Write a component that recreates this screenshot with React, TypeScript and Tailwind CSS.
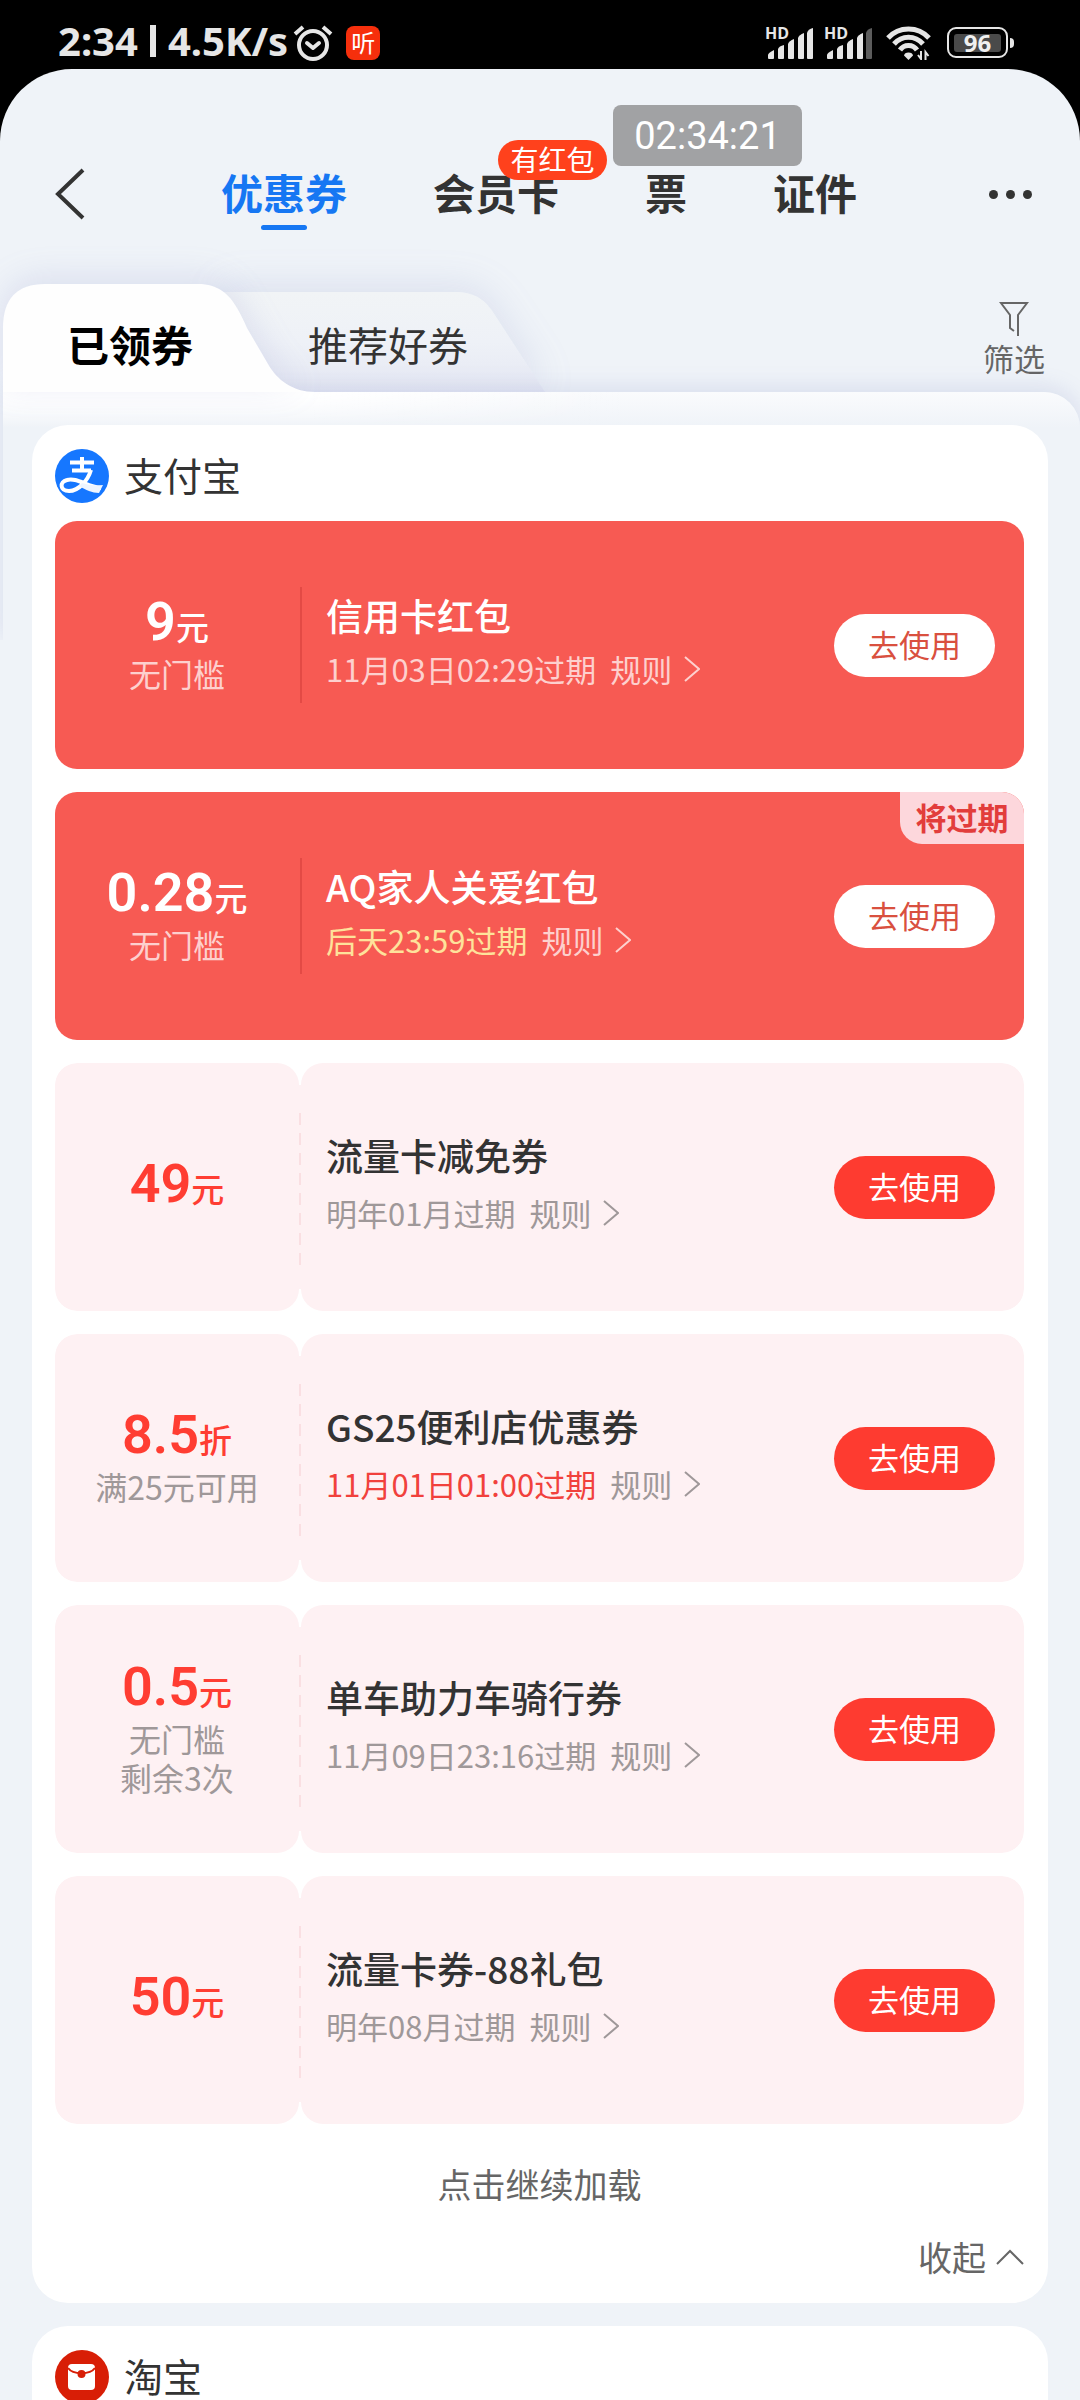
import React from "react";

type Coupon = {
  amount: string;
  unit: string;
  notes: string[];
  title: string;
  expiry: string;
  tone: "red" | "pale";
  urgent?: boolean;
  tag?: string;
};

const coupons: Coupon[] = [
  { amount: "9", unit: "元", notes: ["无门槛"], title: "信用卡红包", expiry: "11月03日02:29过期", tone: "red" },
  { amount: "0.28", unit: "元", notes: ["无门槛"], title: "AQ家人关爱红包", expiry: "后天23:59过期", tone: "red", urgent: true, tag: "将过期" },
  { amount: "49", unit: "元", notes: [], title: "流量卡减免券", expiry: "明年01月过期", tone: "pale" },
  { amount: "8.5", unit: "折", notes: ["满25元可用"], title: "GS25便利店优惠券", expiry: "11月01日01:00过期", tone: "pale", urgent: true },
  { amount: "0.5", unit: "元", notes: ["无门槛", "剩余3次"], title: "单车助力车骑行券", expiry: "11月09日23:16过期", tone: "pale" },
  { amount: "50", unit: "元", notes: [], title: "流量卡券-88礼包", expiry: "明年08月过期", tone: "pale" },
];

function SignalIcon({ weak }: { weak?: boolean }) {
  return (
    <span className="relative block h-8 w-12">
      <span className="absolute left-0 top-0 font-['Open_Sans',sans-serif] text-[16px] font-bold leading-[12px]">HD</span>
      <svg viewBox="0 0 48 32" className="h-8 w-12" fill="currentColor" aria-hidden="true">
        <path d="M3 31V28Q3 26 9 23V31Q9 32 8 32H4Q3 32 3 31Z" />
        <path d="M13 31V22Q14 19 19 18V31Q19 32 18 32H14Q13 32 13 31Z" />
        <path d="M23 31V17Q24 14 29 12V31Q29 32 28 32H24Q23 32 23 31Z" />
        <path d="M33 31V11Q34 8 39 6V31Q39 32 38 32H34Q33 32 33 31Z" />
        <path d="M42 31V6Q43 2 48 1V31Q48 32 47 32H43Q42 32 42 31Z" opacity={weak ? 0.4 : 1} />
      </svg>
    </span>
  );
}

function StatusBar() {
  return (
    <div className="flex h-[69px] items-center pl-[58px] pr-[66px] pt-4 font-['Noto_Sans','Noto_Sans_CJK_SC',sans-serif] text-[#e6e6e6]">
      <div className="flex items-center pb-1 text-[40px] font-bold leading-10">
        <span>2:34</span>
        <span className="mx-3 h-8 w-[6px] bg-[#e6e6e6]" />
        <span>4.5K/s</span>
      </div>
      <svg viewBox="0 0 40 38" className="ml-[5px] h-[38px] w-10" fill="none" stroke="currentColor" strokeWidth="4" aria-label="闹钟">
        <circle cx="20" cy="21" r="14" />
        <path d="M14 19l6 5 6-5" strokeLinecap="round" strokeLinejoin="round" />
        <path d="M2 10l8-7M38 10l-8-7" />
      </svg>
      <span className="ml-[13px] flex h-[34px] w-[34px] items-center justify-center rounded-lg bg-[#f62f0c] text-[24px] leading-none text-white">听</span>
      <div className="ml-auto flex items-center">
        <SignalIcon />
        <span className="w-[11px]" />
        <SignalIcon weak />
        <svg viewBox="0 0 46 34" className="ml-[14px] h-[34px] w-[46px]" fill="none" stroke="currentColor" strokeWidth="5" aria-label="WiFi">
          <path d="M2 12C13 0 32 0 43 12" />
          <path d="M8 18C16 9 29 9 37 18" />
          <path d="M14 24C18 18 27 18 31 24" />
          <path d="M22.500 26.500q4 0 4.500 3l-4.500 4.500-4.500-4.500q.5-3 4.500-3z" fill="currentColor" stroke="none" />
          <path d="M35 25v8l-3-4M39.500 34v-8l3 4" strokeWidth="2" />
        </svg>
        <div className="ml-[15px] flex items-center">
          <div className="flex h-[31px] w-[61px] items-center rounded-[9px] border-2 border-[#e6e6e6] p-[5px]">
            <span className="flex h-[18px] w-[47px] items-center justify-center rounded-[3px] bg-[#4a4a4a] text-[24px] font-bold leading-none text-[#f0f0f0]">96</span>
          </div>
          <span className="ml-[2px] h-[10px] w-1 rounded-r-sm bg-[#e6e6e6]" />
        </div>
      </div>
    </div>
  );
}

function Header() {
  return (
    <header className="relative flex items-center pb-[60px] pl-[54px] pr-[48px] pt-[95px]">
      <button aria-label="返回" className="flex h-[60px] w-[60px] items-center">
        <svg viewBox="0 0 32 52" className="h-[52px] w-8" fill="none" stroke="#333" strokeWidth="4">
          <path d="M29 2L4 26l25 24" />
        </svg>
      </button>
      <nav className="ml-[107px] flex h-[60px] items-center gap-[86px] pb-1 text-[42px] font-bold leading-[60px] text-[#333]">
        <button className="relative text-[#1677f3]">
          优惠券
          <span className="absolute left-1/2 top-[63px] h-[5px] w-[46px] -translate-x-1/2 rounded-full bg-[#1677f3]" />
        </button>
        <button className="relative">
          会员卡
          <span className="absolute -top-[22px] left-[65px] h-10 w-[109px] rounded-full bg-[#ff411c] text-center text-[28px] font-normal leading-[38px] text-white">有红包</span>
        </button>
        <button>票</button>
        <button>证件</button>
      </nav>
      <button aria-label="更多" className="ml-auto flex h-[60px] items-center gap-2">
        <span className="h-[9px] w-[9px] rounded-full bg-[#333]" />
        <span className="h-[9px] w-[9px] rounded-full bg-[#333]" />
        <span className="h-[9px] w-[9px] rounded-full bg-[#333]" />
      </button>
      <div className="absolute left-[613px] top-9 flex h-[61px] w-[189px] items-center justify-center rounded-lg bg-[#a1a2a4] font-['Roboto',sans-serif] text-[38px] leading-none text-white">
        02:34:21
      </div>
    </header>
  );
}

function TabRow() {
  return (
    <div className="relative flex h-[108px] items-start justify-between pl-[3px] pr-[35px]">
      <div className="flex">
        <button className="relative z-10 h-[108px] w-[220px] text-[42px] font-bold text-black">
          <svg viewBox="0 0 312 108" className="absolute left-0 top-0 h-[108px] w-[312px] drop-shadow-[0_-6px_16px_rgba(110,120,190,0.16)]" aria-hidden="true">
            <path d="M0 108V44Q0 0 42 0H195C215 0 226 10 234 24C238 31 241 37 244 44L265 80C274 96 290 108 312 108Z" fill="#fefefe" />
          </svg>
          <span className="relative block pl-16 pt-3 text-left leading-[60px]">已领券</span>
        </button>
        <button className="relative h-[108px] w-[330px] text-[40px] text-[#333]">
          <svg viewBox="0 0 340 108" className="absolute left-0 top-0 h-[108px] w-[340px] drop-shadow-[0_-6px_18px_rgba(110,120,190,0.15)]" aria-hidden="true">
            <defs>
              <linearGradient id="restTab" x1="0" y1="0" x2="0" y2="1">
                <stop offset="0" stopColor="#f1f4f6" />
                <stop offset="0.5" stopColor="#eef1f7" />
                <stop offset="1" stopColor="#e5e8f3" />
              </linearGradient>
            </defs>
            <path d="M0 108V8H232C252 8 262 16 270 28L322 108Z" fill="url(#restTab)" />
          </svg>
          <span className="relative block pl-[85px] pt-3 text-left leading-[60px]">推荐好券</span>
        </button>
      </div>
      <button className="flex flex-col items-center text-[31px] leading-10 text-[#666]">
        <svg viewBox="0 0 30 34" className="mb-[2px] mt-[18px] h-[34px] w-[30px]" fill="none" stroke="currentColor" strokeWidth="2" aria-hidden="true">
          <path d="M19 34V13L28 1H2l9 12v13l4 3" />
        </svg>
        筛选
      </button>
    </div>
  );
}

function Chevron() {
  return (
    <svg viewBox="0 0 16 26" className="ml-3 h-[26px] w-4" fill="none" stroke="currentColor" strokeWidth="2" aria-hidden="true">
      <path d="M1 1l14 12L1 25" />
    </svg>
  );
}

function CouponRow({ c }: { c: Coupon }) {
  const red = c.tone === "red";
  const expiryColor = c.urgent ? (red ? "text-[#fee29b]" : "text-[#f1413c]") : "";
  return (
    <li className={`relative flex h-[248px] gap-[2px] overflow-hidden rounded-[22px] ${red ? "bg-[#f75a53]" : ""}`}>
      <div className={`flex w-[244px] shrink-0 flex-col items-center justify-center rounded-[22px] ${red ? "" : "bg-[#fef1f3]"}`}>
        <div className={`mb-[3px] flex items-baseline ${red ? "text-white" : "text-[#ff3d32]"}`}>
          <span className="font-['Roboto',sans-serif] text-[54px] font-semibold leading-[50px]">{c.amount}</span>
          <span className="text-[33px] font-medium leading-[50px]">{c.unit}</span>
        </div>
        {c.notes.map((n) => (
          <p key={n} className={`text-[32px] leading-[39px] ${red ? "text-[#fdd0ce]" : "text-[#9f9899]"}`}>{n}</p>
        ))}
      </div>
      {red ? (
        <span className="absolute left-[245px] top-[66px] h-[116px] w-[2px] bg-[#e34a45]" />
      ) : (
        <>
          <span className="absolute left-[244px] top-[22px] h-[204px] w-[2px] bg-[#fef1f3]" />
          <span className="absolute left-[244px] top-[50px] h-[156px] w-[2px] bg-[repeating-linear-gradient(180deg,#fadfe2_0_12px,transparent_12px_20px)]" />
        </>
      )}
      <div className={`flex min-w-0 flex-1 items-center justify-between rounded-[22px] pl-[25px] pr-[29px] ${red ? "" : "bg-[#fef1f3]"}`}>
        <div className="pb-[6px]">
          <h3 className={`text-[37px] font-medium leading-[54px] ${red ? "text-white" : "mb-1 text-[#333]"}`}>{c.title}</h3>
          <p className={`flex items-center whitespace-nowrap text-[31px] leading-[54px] ${red ? "text-[#fdd0ce]" : "text-[#9f9899]"}`}>
            <span className={expiryColor}>{c.expiry}</span>
            <button className="ml-[14px] flex items-center">规则<Chevron /></button>
          </p>
        </div>
        <button className={`h-[63px] w-[161px] rounded-full pb-[3px] text-[31px] leading-[60px] ${red ? "bg-white text-[#d9503f]" : "bg-[#fe3b30] text-white"}`}>去使用</button>
      </div>
      {c.tag && (
        <span className="absolute right-0 top-0 h-[52px] w-[124px] rounded-bl-[22px] bg-[#fdd7dc] text-center text-[31px] font-bold leading-[49px] text-[#e23d3b]">{c.tag}</span>
      )}
    </li>
  );
}

function AlipayLogo() {
  return (
    <svg viewBox="0 0 54 54" className="h-[54px] w-[54px]" fill="none" stroke="#fff" aria-hidden="true">
      <circle cx="27" cy="27" r="27" fill="#1677ff" stroke="none" />
      <path d="M27 8v13M15 13.500h24M17 21.500h19" strokeWidth="4" />
      <path d="M36 21C33 31 24 42 14 42C5 42 4 33 12 31C22 28 32 38 46 39" strokeWidth="4" />
      <path d="M27 34C34 36 40 37 48 36L44 44C37 44 31 41 24 37Z" fill="#eef5ff" stroke="none" />
    </svg>
  );
}

function TaobaoLogo() {
  return (
    <svg viewBox="0 0 54 54" className="h-[54px] w-[54px]" aria-hidden="true">
      <circle cx="27" cy="27" r="27" fill="#d81e06" />
      <rect x="13" y="14" width="27" height="26" rx="4" fill="#fff" />
      <path d="M13 18C18 25 35 25 40 18" fill="none" stroke="#d81e06" strokeWidth="2" />
      <circle cx="26.500" cy="24" r="4" fill="#d81e06" />
    </svg>
  );
}

export default function App() {
  return (
    <div className="h-screen overflow-hidden bg-black font-['Noto_Sans_CJK_SC',sans-serif]">
      <StatusBar />
      <main className="min-h-full rounded-t-[72px] bg-[#eff3f8]">
        <Header />
        <TabRow />
        <section className="relative pt-[33px]">
          <div className="absolute left-[3px] right-0 top-0 h-[248px] rounded-tr-[36px] bg-[linear-gradient(180deg,#fafbfd_0,#eff3f8_36px)] shadow-[0_-4px_22px_rgba(110,120,190,0.18)] [clip-path:inset(-40px_-10px_0_-10px)]" />
          <div className="absolute left-[3px] top-0 h-9 w-[620px] bg-[linear-gradient(90deg,#ffffff_50%,transparent)] [mask-image:linear-gradient(180deg,#000,transparent)]" />
          <div className="relative mx-8 rounded-[36px] bg-white pb-[22px] pl-[23px] pr-6 pt-6">
            <h2 className="mb-[18px] flex items-center gap-[15px] text-[39px] leading-[48px] text-[#333]">
              <AlipayLogo />
              <span className="pb-1">支付宝</span>
            </h2>
            <ul className="flex flex-col gap-[23px]">
              {coupons.map((c) => (
                <CouponRow key={c.title} c={c} />
              ))}
            </ul>
            <button className="mx-auto mt-9 block text-[34px] leading-[48px] text-[#666]">点击继续加载</button>
            <button className="ml-auto mt-[25px] flex items-center gap-[10px] text-[34px] leading-[48px] text-[#666]">
              收起
              <svg viewBox="0 0 28 16" className="h-4 w-7" fill="none" stroke="currentColor" strokeWidth="2" aria-hidden="true">
                <path d="M1 15L14 2l13 13" />
              </svg>
            </button>
          </div>
          <div className="relative mx-8 mt-[23px] rounded-t-[36px] bg-white px-[23px] pb-20 pt-6">
            <h2 className="flex items-center gap-[15px] text-[39px] leading-[48px] text-[#333]">
              <TaobaoLogo />
              <span className="pb-1">淘宝</span>
            </h2>
          </div>
        </section>
      </main>
    </div>
  );
}
